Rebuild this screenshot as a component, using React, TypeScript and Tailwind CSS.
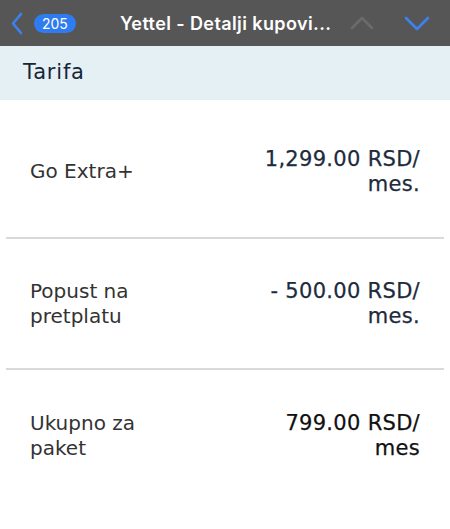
import React from "react";

type Row = {
  label: string[];
  value: string[];
  dark?: boolean;
  h: string;
};

const rows: Row[] = [
  { label: ["Go Extra+"], value: ["1,299.00 RSD/", "mes."], h: "h-[137px] pt-[6px]" },
  { label: ["Popust na", "pretplatu"], value: ["- 500.00 RSD/", "mes."], h: "h-[129px]" },
  { label: ["Ukupno za", "paket"], value: ["799.00 RSD/", "mes"], dark: true, h: "h-[131px]" },
];

const Chevron = ({ d, color, w, h }: { d: string; color: string; w: number; h: number }) => (
  <svg width={w} height={h} viewBox={`0 0 ${w} ${h}`} fill="none">
    <path d={d} stroke={color} strokeWidth="2.6" strokeLinecap="round" strokeLinejoin="round" />
  </svg>
);

const App = () => {
  return (
    <div className="w-[450px] h-[529px] bg-white overflow-hidden font-['DejaVu_Sans',sans-serif]">
      {/* top bar */}
      <div className="h-[46px] bg-[#565656] flex items-center pl-[10px] pr-[20px]">
        <Chevron d="M11 2 L3 11.5 L11 21" color="#3b82f0" w={14} h={23} />
        <span className="ml-[10px] h-[19px] px-[8px] rounded-full bg-[#2f7bf0] text-white text-[14px] leading-[19px] font-['Inter',sans-serif]">
          205
        </span>
        <span className="ml-[44px] text-white text-[18px] font-semibold font-['Inter',sans-serif] tracking-[0.4px]">
          Yettel - Detalji kupovi...
        </span>
        <div className="ml-auto flex items-center gap-[30px]">
          <Chevron d="M2 13 L12 3 L22 13" color="#6b6b6b" w={24} h={16} />
          <Chevron d="M2 3 L13 14 L24 3" color="#3b82f0" w={26} h={17} />
        </div>
      </div>

      {/* section header */}
      <div className="h-[54px] bg-[#e5f0f5] flex items-center px-[23px]">
        <span className="text-[21px] text-[#17263a] tracking-[0.8px]">Tarifa</span>
      </div>

      {rows.map((r, i) => (
        <div key={i}>
          <div className={`flex items-center justify-between px-[30px] ${r.h}`}>
            <div className="text-[20px] leading-[25px] text-[#333333]">
              {r.label.map((l) => (
                <div key={l}>{l}</div>
              ))}
            </div>
            <div
              className={`text-right text-[21px] leading-[25px] tracking-[0.3px] [-webkit-text-stroke:0.25px] ${
                r.dark ? "text-[#111111]" : "text-[#1d2b3d]"
              }`}
            >
              {r.value.map((v) => (
                <div key={v}>{v}</div>
              ))}
            </div>
          </div>
          {i < rows.length - 1 && <div className="mx-[6px] h-[2px] bg-[#d9d9d9]" />}
        </div>
      ))}
    </div>
  );
};

export default App;
